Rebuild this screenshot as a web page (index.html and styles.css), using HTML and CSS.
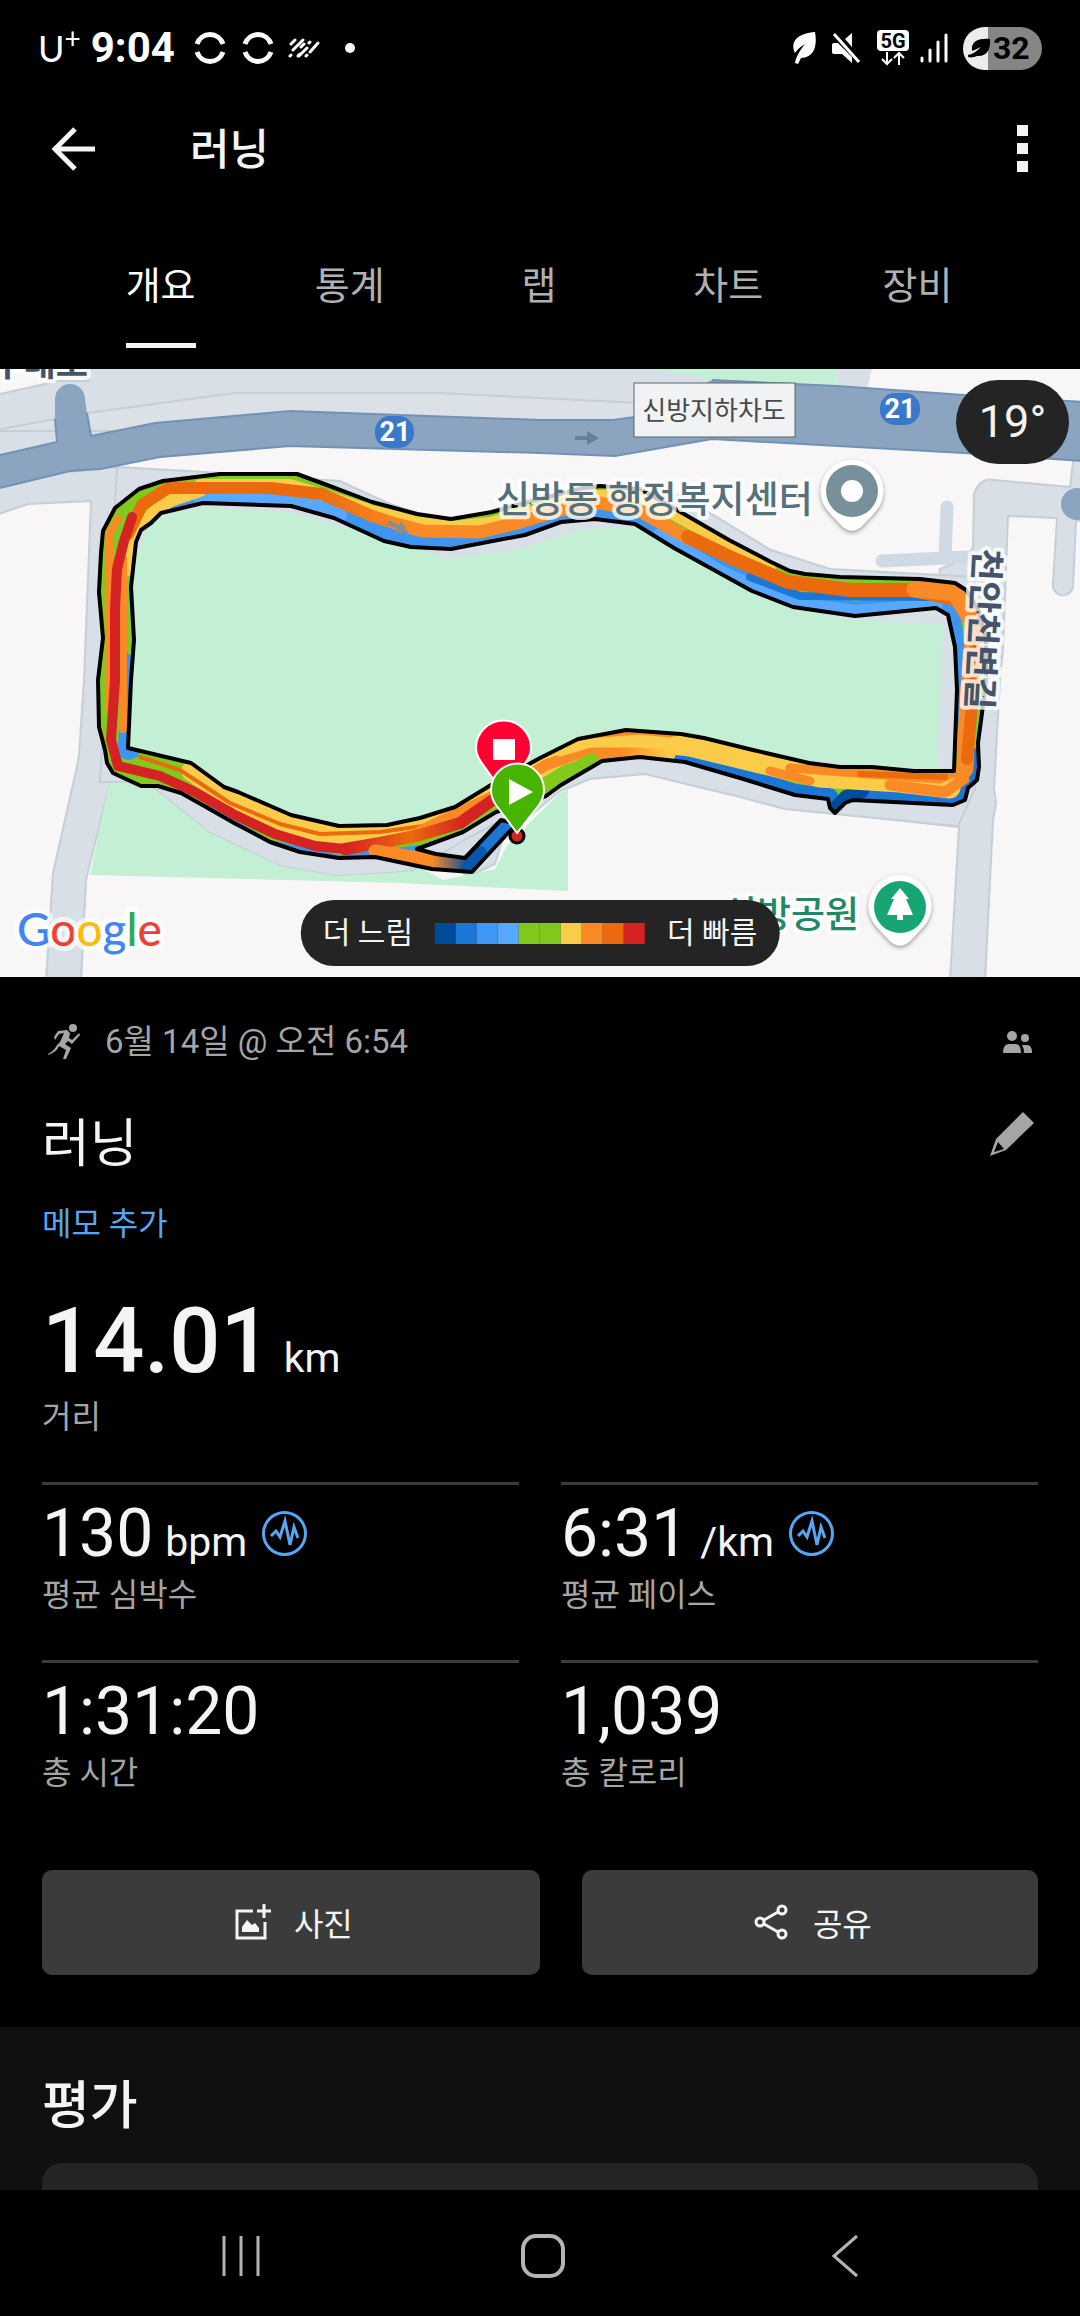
FILE: index.html
```html
<!DOCTYPE html>
<html lang="ko">
<head>
<meta charset="utf-8">
<meta name="viewport" content="width=device-width, initial-scale=1">
<title>러닝</title>
<link rel="stylesheet" href="styles.css">
</head>
<body>

<!-- status bar -->
<div class="status">
	<div class="status-left">
		<span class="carrier">U<sup>+</sup></span>
		<span class="clock">9:04</span>
		<svg class="st-ring" width="32" height="34" viewBox="0 0 32 34"><path d="M3 13a13.7 13.7 0 0 1 26 0M3 21a13.7 13.7 0 0 0 26 0" fill="none" stroke="#fff" stroke-width="5"/></svg>
		<svg class="st-ring" width="32" height="34" viewBox="0 0 32 34"><path d="M3 13a13.7 13.7 0 0 1 26 0M3 21a13.7 13.7 0 0 0 26 0" fill="none" stroke="#fff" stroke-width="5"/></svg>
		<svg class="st-dash" width="32" height="20" viewBox="0 0 32 20"><path d="M3 6l4-4M5 12l10-10M2 18l1-1M11 18l8-8M21 5l1-1M10 18l2-2M18 18l1-1M22 14l8-9M13 9l3-3" fill="none" stroke="#fff" stroke-width="3" stroke-linecap="round"/></svg>
		<span class="st-dot"></span>
	</div>
	<div class="status-right">
		<svg width="26" height="34" viewBox="0 0 26 34"><path d="M4 22C-2 10 8 2 24 1C26 12 25 27 10 27L7 33L4 32C5 26 9 19 14 13C9 16 6 19 4 22Z" fill="#fff"/></svg>
		<svg class="st-mute" width="30" height="34" viewBox="0 0 30 34"><path d="M1 14q0-2 2-2h4l14 14v6l-10-9H3q-2 0-2-2zM14 8l7-6v14z" fill="#fff"/><path d="M3 3l25 28" stroke="#fff" stroke-width="3"/></svg>
		<svg class="st-5g" width="32" height="36" viewBox="0 0 32 36"><rect width="32" height="21" rx="4" fill="#fff"/><text x="16" y="18" text-anchor="middle" class="t-5g">5G</text><path d="M10 22v12M5 29l5 5l5-5M22 35v-12M17 28l5-5l5 5" fill="none" stroke="#fff" stroke-width="2"/></svg>
		<svg class="st-signal" width="28" height="30" viewBox="0 0 28 30"><path d="M2 25v3M10 17v11M18 9v19M26 2v26" stroke="#fff" stroke-width="3" stroke-linecap="round"/></svg>
		<span class="battery"><svg width="23" height="22" viewBox="0 0 23 22"><path d="M4 14C3 5 9 1 22 2C23 13 18 20 9 19C7 20 3 21 0 20L0 18C5 17 9 14 13 10C9 12 6 13 4 14Z" fill="#000"/></svg>32</span>
	</div>
</div>

<!-- app bar -->
<header class="appbar">
	<button class="icon-btn" aria-label="뒤로"><svg width="44" height="44" viewBox="0 0 44 44"><path d="M43 22H4M23 2L3 22l20 20" fill="none" stroke="#f4f4f4" stroke-width="5"/></svg></button>
	<h1>러닝</h1>
	<button class="icon-btn" aria-label="더보기"><svg width="12" height="48" viewBox="0 0 12 48"><path d="M0 0h11v11H0zM0 18h11v11H0zM0 36h11v11H0z" fill="#f4f4f4"/></svg></button>
</header>

<nav class="tabs">
	<div><button class="tab active">개요</button></div>
	<div><button class="tab">통계</button></div>
	<div><button class="tab">랩</button></div>
	<div><button class="tab">차트</button></div>
	<div><button class="tab">장비</button></div>
</nav>

<!-- map -->
<div class="map">
	<svg class="map-canvas" viewBox="0 0 1080 608" preserveAspectRatio="xMidYMid slice">
		<defs>
			<path id="ring" clip-rule="evenodd" fill-rule="evenodd" d="M103 162L115 139L139 120L163 112L220 105H297L327 116L372 133L417 145L451 150L492 143L517 136L583 119L600 117L640 120L677 141L729 171L771 193L790 202L805 205L840 208L920 210L955 214L966 221L978 240L986 270L986 311L982 344L978 374L979 398L977 411L968 419L965 431L953 436L853 431L845 434L835 444L830 439L828 430L795 426L740 409L685 393L640 388L602 392L561 416L546 427L520 436L496 443L463 463L417 480L436 485L465 489L501 451L518 455L508 464L472 503L432 500L375 488L339 489L300 483L270 473L234 454L206 438L181 424L158 417H141L113 404L107 394L105 381L99 358L98 311L103 269L99 223L101 184ZM136 173L131 218L134 271L131 311L128 379L191 394L224 418L238 423L291 446L339 457L387 456L420 449L455 438L491 416L540 389L578 370L626 361L681 365L704 369L753 381L809 394L840 398L872 398L914 402H954L957 321L955 278L948 246L936 239L855 247L793 238L752 222L674 179L635 155L595 150L561 153L525 166L451 180L411 178L384 172L334 149L291 137L203 134L161 144L151 154L141 161Z"/>
			<clipPath id="clip"><use href="#ring"/></clipPath>
			<linearGradient id="gOrange"><stop offset="0" stop-color="#ea6a0d"/><stop offset=".65" stop-color="#ea6a0d"/><stop offset="1" stop-color="#fa8a25"/></linearGradient>
			<linearGradient id="gRed"><stop offset="0" stop-color="#d52222"/><stop offset=".35" stop-color="#ea6a0d"/><stop offset=".65" stop-color="#d52222"/></linearGradient>
			<linearGradient id="gTail"><stop offset="0" stop-color="#fa8a25"/><stop offset=".6" stop-color="#fa8a25"/><stop offset="1" stop-color="#004a9e"/></linearGradient>
			<linearGradient id="gMid"><stop offset="0" stop-color="#fa8a25"/><stop offset=".8" stop-color="#fa8a25"/><stop offset="1" stop-color="#fbcb4a"/></linearGradient>
			<filter id="drop" x="-30%" y="-30%" width="160%" height="160%"><feDropShadow dx="0" dy="2" stdDeviation="2" flood-opacity=".4"/></filter>
		</defs>

		<rect width="1080" height="608" fill="#f8f6f7"/>

		<!-- roads -->
		<g fill="#d8dfe6" stroke="#c4cfd6" stroke-width="2">
			<path d="M-4 26L58 12L90 12L60 -4H700L712 11V60H400L0 100Z"/>
			<path d="M-4 61L55 50L88 44L235 24H440L540 29L640 34V62H-4Z" fill="#dce1e8"/>
			<path d="M-4 110V146L28 135L91 132L84 311L79 386L76 402L53 504L46 612H81L86 511L110 413L170 330L180 160L117 98Z"/>
			<path d="M973 178L974 125Q980 108 994 111L1070 118L1074 86L1084 88V152L1076 152L1073 218A10 10 0 0 1 1053 214L1057 149L1008 147L1003 280L1000 311L994 420L996 434L993 451L985 612H950L959 458L915 453L940 200L967 190Z"/>
			<path d="M117 98L205 103L340 112L390 135L450 155L540 126H680L771 181L830 200L975 208V420L958 457L915 453L785 440L740 428L645 405L590 410L560 422L503 469L495 495L470 507L430 490L405 503L335 507L280 497L210 464L155 420L140 413H100Z"/>
		</g>
		<g fill="none" stroke="#cfdae4" stroke-width="13" stroke-linecap="round">
			<path d="M882 192L968 188M947 138L945 190"/>
		</g>

		<!-- parks -->
		<g fill="#c3f0d5">
			<path d="M128 379L132 200L150 150L203 138L290 143L400 175L445 189L515 182L583 160L635 158L750 220L790 240L850 250L943 256L941 311L937 400L870 397L780 388L640 360L590 366L530 400L470 430L400 455L330 456L250 430L190 395Z"/>
			<path d="M109 414L140 413L158 423L210 464L280 497L335 507L405 503L418 497L443 511L495 500L508 475L560 424L568 420V522L400 514L90 506Z"/>
			<path d="M650 0L712 11L837 17L838 0Z"/>
		</g>
		<path d="M838 0H872L867 22L837 17Z" fill="#d8dfe6"/>
		<path d="M872 0H1080V33L964 26L867 21Z" fill="#f8f6f7"/>
		<path d="M410 503L470 468L500 452" fill="none" stroke="#c4cfd6" stroke-width="2"/>

		<!-- highway -->
		<path d="M-4 87L58 73L55 50V30A15 15 0 0 1 85 30L87 44L91 67L155 54L290 42L540 51H613L635 48L712 11L837 17L964 26L1084 33V92L964 84L712 70L615 87L540 84L290 77L160 88L100 100L70 102L-4 120Z" fill="#8ba4c0"/>
		<path d="M-4 87L57 73L55 50M87 44L91 67L155 54L290 42L540 51H613L635 48M712 11L837 17L964 26L1084 33M-4 120L70 102L100 100L160 88L290 77L540 84L615 87L712 70L964 84L1084 92" fill="none" stroke="#7292b5" stroke-width="2"/>
		<circle cx="1077" cy="135" r="16" fill="#8ba4c0"/>
		<path d="M575 67h12v-5l12 7l-12 7v-5h-12z" fill="#6b7e93"/>

		<!-- run track, coloured by pace -->
		<use href="#ring" fill="#82c91e"/>
		<g clip-path="url(#clip)" fill="none" stroke-linejoin="round" stroke-linecap="round">
			<path d="M129 380L134 271L131 218L134 173L151 152L203 131L291 134L334 146L384 168L451 176L525 162L595 146L635 151L674 175L752 218L793 234L855 243L936 236L950 250L957 300L954 350" stroke="#3d95f0" stroke-width="22"/>
			<path d="M200 128L300 132L340 146M660 166L720 203L790 234L855 243L936 236" stroke="#58a8ff" stroke-width="14"/>
			<path d="M750 208L800 227L930 228" stroke="#1b76d4" stroke-width="8"/>
			<path d="M131 200L132 280" stroke="#82c91e" stroke-width="12"/>
			<path d="M640 388L685 393L740 409L795 426L828 430L835 444L853 431L950 436L970 420L978 390" stroke="#1b76d4" stroke-width="22"/>
			<path d="M830 445L846 428L862 422" stroke="#004a9e" stroke-width="14"/>
			<path d="M206 440L270 475L339 490L420 480" stroke="#3d95f0" stroke-width="8"/>
			<path d="M602 358L640 358M740 378L810 394" stroke="#1b76d4" stroke-width="8"/>

			<path d="M127 200L138 164L150 148L168 132L200 121" stroke="#fbcb4a" stroke-width="14"/>
			<path d="M200 116H290L330 128L372 142L420 154L451 158L490 154L540 141L580 127L640 127L690 154L730 178L770 200" stroke="#fbcb4a" stroke-width="12"/>
			<path d="M110 340L109 165L118 150" stroke="#fa8a25" stroke-width="8"/>
			<path d="M123 190V360" stroke="#fa8a25" stroke-width="8"/>
			<path d="M400 156L423 162L480 163L517 154L560 141L600 134L640 142L690 170" stroke="#fa8a25" stroke-width="13"/>
			<path d="M128 165L142 136L168 119H270L322 125L372 147L410 159" stroke="url(#gOrange)" stroke-width="12"/>
			<path d="M688 168L736 191L788 213L850 221L912 221L955 230" stroke="#ea6a0d" stroke-width="14"/>
			<path d="M915 220L955 224L974 255L968 330L965 400L950 416" stroke="#fa8a25" stroke-width="17"/>
			<path d="M976 260L972 335L967 390" stroke="#ea6a0d" stroke-width="12"/>

			<path d="M192 402L240 435L291 456L339 466L400 464L460 446L510 416L560 386L620 369L690 377L760 394L820 408L900 413L950 419" stroke="#fbcb4a" stroke-width="21"/>
			<path d="M140 388L180 401L230 434L280 455L320 465L380 463L430 456L500 424" stroke="#ea6a0d" stroke-width="4"/>
			<path d="M420 462L500 424L546 396L580 384L640 384L670 386" stroke="url(#gMid)" stroke-width="11"/>
			<path d="M552 411L592 389" stroke="#82c91e" stroke-width="10"/>
			<path d="M560 383L600 371L640 368" stroke="#fbcb4a" stroke-width="9"/>
			<path d="M600 364L640 361L670 364M770 402L810 412M790 399L870 405L940 410L962 400" stroke="#fa8a25" stroke-width="9"/>
			<path d="M860 405L945 408" stroke="#ea6a0d" stroke-width="6"/>
			<path d="M890 416L945 423L964 410" stroke="#fa8a25" stroke-width="11"/>
			<path d="M132 148L124 172L117 200L115 240V311L111 371L118 397L160 407L195 423L235 446L275 465L315 477L345 480" stroke="#d52222" stroke-width="10"/>
			<path d="M345 480L380 474L420 466L460 454L500 426L530 405" stroke="url(#gRed)" stroke-width="12"/>
			<path d="M375 482L400 486L435 492L470 497" stroke="url(#gTail)" stroke-width="13"/>
			<path d="M472 500L512 448" stroke="#1b76d4" stroke-width="20"/>
			<path d="M468 500L480 484" stroke="#004a9e" stroke-width="14" opacity=".7"/>
		</g>
		<use href="#ring" fill="none" stroke="#000" stroke-width="4" stroke-linejoin="round"/>
		<path d="M389 151l10 5l2-4l8 12h-14l2-4l-10-5z" fill="#8a8c8e"/>

		<!-- labels -->
		<text x="88" y="7" text-anchor="end" class="lbl road">남부대로</text>
		<text transform="translate(975 179) rotate(93)" class="lbl road">천안천변길</text>
		<text x="496" y="144" class="lbl place">신방동 행정복지센터</text>
		<text x="723" y="559" class="lbl park">신방공원</text>
		<rect x="634" y="14" width="161" height="54" fill="#f1f2f4" stroke="#5f6368" stroke-width="1"/>
		<text x="714" y="51" text-anchor="middle" class="underpass">신방지하차도</text>
		<rect x="375" y="47" width="39" height="32" rx="15" fill="#3a78c9"/>
		<text x="395" y="72" text-anchor="middle" class="shield">21</text>
		<rect x="880" y="24" width="40" height="32" rx="15" fill="#3a78c9"/>
		<text x="900" y="49" text-anchor="middle" class="shield">21</text>

		<!-- place pins -->
		<g filter="url(#drop)">
			<path d="M852 91A31 31 0 0 1 876 142L861 158Q852 165 843 158L828 142A31 31 0 0 1 852 91Z" fill="#fff"/>
			<path d="M900 506A31 31 0 0 1 924 557L909 573Q900 580 891 573L876 557A31 31 0 0 1 900 506Z" fill="#fff"/>
		</g>
		<circle cx="852" cy="122" r="26" fill="#78909c"/>
		<circle cx="852" cy="122" r="11" fill="#fff"/>
		<circle cx="900" cy="538" r="26" fill="#17a673"/>
		<path d="M900 519l9 11h-3l7 16h-10v5h-6v-5h-10l7-16h-3z" fill="#fff"/>

		<!-- start and stop -->
		<circle cx="517" cy="467" r="7" fill="#d52222" stroke="#000" stroke-width="3"/>
		<path d="M503 424L484 397Q476 387 476 379A27 27 0 0 1 531 379Q531 387 523 397Z" fill="#ff0030" stroke="#fff" stroke-width="2"/>
		<rect x="493" y="370" width="22" height="21" fill="#fff"/>
		<path d="M517 464L496 436Q491 429 491 421A26 26 0 0 1 544 421Q544 429 539 436Z" fill="#46b400" stroke="#fff" stroke-width="2"/>
		<path d="M509 410V436L533 423Z" fill="#fff"/>

		<text x="17" y="577" class="google"><tspan fill="#4285f4">G</tspan><tspan fill="#ea4335">o</tspan><tspan fill="#fbbc04">o</tspan><tspan fill="#4285f4">g</tspan><tspan fill="#34a853">l</tspan><tspan fill="#ea4335">e</tspan></text>
	</svg>

	<div class="temp">19°</div>

	<div class="legend">
		<span>더 느림</span>
		<div class="scale"><i class="c1"></i><i class="c2"></i><i class="c3"></i><i class="c4"></i><i class="c5"></i><i class="c5"></i><i class="c6"></i><i class="c7"></i><i class="c8"></i><i class="c9"></i></div>
		<span>더 빠름</span>
	</div>
</div>

<!-- activity details -->
<main class="details">
	<div class="date-row">
		<svg width="42" height="42" viewBox="2 3 42 42" fill="#a5a5a5"><circle cx="33" cy="10" r="4"/><path d="M15 22L14 19L18 13L27 12L30 15L29 20L32 22L39 15L40 17L32 26L28 23L25 26L31 30L26 41L23 41L26 32L19 28Q17 34 8 37L8 36Q15 32 17 27L20 24L24 15L19 16Z"/></svg>
		<span>6월 14일 @ 오전 6:54</span>
		<svg width="42" height="42" viewBox="0 0 42 42" fill="#a5a5a5"><circle cx="16" cy="15" r="5"/><circle cx="29" cy="17" r="4"/><path d="M7 32Q7 23 13 23H19Q25 23 25 32ZM26 24H31Q36 24 36 32H28Q28 27 26 24Z"/></svg>
	</div>

	<div class="title-row">
		<h2>러닝</h2>
		<button class="icon-btn edit" aria-label="편집"><svg width="44" height="44" viewBox="0 0 44 44"><path d="M33 0L44 11L16 38L0 44L6 27Z" fill="#a5a5a5"/><path d="M8 30L14 37L4 40Z" fill="#000"/></svg></button>
	</div>
	<a class="memo" href="#">메모 추가</a>

	<div class="distance"><b>14.01</b><span class="unit">km</span></div>
	<div class="label">거리</div>

	<div class="stats">
		<div class="stat">
			<div class="value">130 <span class="unit">bpm</span><svg width="45" height="45" viewBox="0 0 45 45"><use href="#pulse"/></svg></div>
			<div class="label">평균 심박수</div>
		</div>
		<div class="stat">
			<div class="value">6:31 <span class="unit">/km</span><svg width="45" height="45" viewBox="0 0 45 45"><g id="pulse" fill="none" stroke="#58a5f2" stroke-width="3"><circle cx="22.5" cy="22.5" r="21"/><path d="M9 25L14 20L18 26L23 10L28 34L32 16L36 27"/></g></svg></div>
			<div class="label">평균 페이스</div>
		</div>
		<div class="stat">
			<div class="value">1:31:20</div>
			<div class="label">총 시간</div>
		</div>
		<div class="stat">
			<div class="value">1,039</div>
			<div class="label">총 칼로리</div>
		</div>
	</div>

	<div class="actions">
		<button><svg width="36" height="36" viewBox="0 0 36 36" fill="none" stroke="#f4f4f4" stroke-width="3"><path d="M18 7H2V34H30V18M29 0V14M22 7H36"/><path d="M7 28V23L12 16L17 21L20 19L24 24V28Z" fill="#f4f4f4" stroke="none"/></svg>사진</button>
		<button><svg width="36" height="36" viewBox="0 0 36 36" fill="none" stroke="#f4f4f4" stroke-width="3"><circle cx="6" cy="18" r="4"/><circle cx="28" cy="6" r="4"/><circle cx="28" cy="30" r="4"/><path d="M10 16L24 8M10 20L24 28"/></svg>공유</button>
	</div>
</main>

<section class="rating">
	<h2>평가</h2>
	<div class="card"></div>
</section>

<!-- system navigation -->
<div class="sysnav">
	<button aria-label="최근 앱"><svg width="42" height="44" viewBox="0 0 42 44"><path d="M4 2v40M21 2v40M38 2v40" stroke="#b4b4b4" stroke-width="3"/></svg></button>
	<button aria-label="홈"><svg width="44" height="44" viewBox="0 0 44 44"><rect x="2" y="2" width="40" height="40" rx="13" fill="none" stroke="#b4b4b4" stroke-width="4"/></svg></button>
	<button aria-label="뒤로"><svg width="28" height="44" viewBox="0 0 28 44"><path d="M26 2L3 22L26 42" fill="none" stroke="#b4b4b4" stroke-width="3"/></svg></button>
</div>

</body>
</html>
```

FILE: styles.css
```css
* {
	box-sizing: border-box;
}

body {
	margin: 0;
	min-height: 100vh;
	display: flex;
	flex-direction: column;
	background: #000;
	color: #f4f4f4;
	font-family: Roboto, "Noto Sans CJK KR", sans-serif;
	font-size: 32px;
	line-height: 40px;
}

h1, h2 {
	margin: 0;
	font-weight: 500;
}

button {
	margin: 0;
	padding: 0;
	border: 0;
	background: none;
	color: inherit;
	font-family: inherit;
	cursor: pointer;
}

svg {
	display: block;
	flex: none;
}

/* status bar */

.status {
	display: flex;
	justify-content: space-between;
	align-items: center;
	height: 96px;
	padding: 0 38px;
	color: #fff;
}

.status-left,
.status-right {
	display: flex;
	align-items: center;
}

.carrier {
	font-family: Lato, sans-serif;
	font-size: 36px;
	font-weight: 400;
}

.carrier sup {
	font-size: 28px;
	line-height: 0;
}

.clock {
	margin-left: 10px;
	margin-right: 3px;
	font-size: 42px;
	font-weight: 700;
}

.st-ring {
	margin-left: 16px;
}

.st-dash {
	margin-left: 14px;
}

.st-dot {
	width: 10px;
	height: 10px;
	margin-left: 25px;
	border-radius: 50%;
	background: #fff;
}

.st-mute {
	margin-left: 14px;
}

.st-5g {
	margin-left: 16px;
}

.t-5g {
	font: 700 20px Roboto, sans-serif;
}

.st-signal {
	margin-left: 11px;
}

.battery {
	display: flex;
	align-items: center;
	gap: 2px;
	width: 79px;
	height: 43px;
	margin-left: 15px;
	padding-left: 5px;
	border-radius: 22px;
	background: linear-gradient(90deg, #ececec 25px, #858585 25px);
	color: #000;
	font-size: 32px;
	font-weight: 700;
}

/* app bar */

.appbar {
	display: flex;
	align-items: center;
	height: 105px;
	padding: 0 51px 0 52px;
}

.appbar h1 {
	flex: 1;
	margin-left: 94px;
	padding-top: 2px;
	font-size: 43px;
}

/* tabs */

.tabs {
	display: flex;
	padding: 28px 68px 21px 66px;
}

.tabs div {
	flex: 1;
	display: flex;
	justify-content: center;
}

.tab {
	height: 119px;
	padding-bottom: 8px;
	border-bottom: 5px solid transparent;
	color: #b0b0b0;
	font-size: 38px;
}

.tab.active {
	border-color: #f4f4f4;
	color: #fff;
}

/* map */

.map {
	position: relative;
	height: 608px;
	overflow: hidden;
}

.map-canvas {
	width: 100%;
	height: 100%;
}

.lbl {
	paint-order: stroke;
	stroke: #fff;
	stroke-opacity: .8;
	stroke-width: 8px;
	stroke-linejoin: round;
	font-family: "Noto Sans CJK KR", sans-serif;
}

.road {
	fill: #44546a;
	font-size: 35px;
	font-weight: 700;
}

.place {
	fill: #56707c;
	font-size: 37px;
	font-weight: 500;
}

.park {
	fill: #1f8a63;
	font-size: 37px;
	font-weight: 500;
}

.underpass {
	fill: #4a4a4a;
	font: 26px "Noto Sans CJK KR", sans-serif;
}

.shield {
	fill: #fff;
	font: 700 27px Roboto, sans-serif;
}

.google {
	paint-order: stroke;
	stroke: #fff;
	stroke-opacity: .7;
	stroke-width: 10px;
	stroke-linejoin: round;
	font: 500 46px Lato, sans-serif;
}

.temp {
	position: absolute;
	top: 11px;
	right: 11px;
	width: 113px;
	border-radius: 42px;
	background: #242424;
	font-size: 45px;
	line-height: 84px;
	text-align: center;
}

.legend {
	position: absolute;
	left: 50%;
	bottom: 11px;
	transform: translateX(-50%);
	display: flex;
	align-items: center;
	gap: 22px;
	height: 66px;
	padding: 0 22px;
	border-radius: 33px;
	background: #242424;
	font-size: 30px;
	white-space: nowrap;
}

.scale {
	display: flex;
}

.scale i {
	width: 21px;
	height: 21px;
}

.c1 { background: #004a9e; }
.c2 { background: #1b76d4; }
.c3 { background: #3e97f5; }
.c4 { background: #58a8ff; }
.c5 { background: #82c91e; }
.c6 { background: #fbcb4a; }
.c7 { background: #fa8a25; }
.c8 { background: #ea6a0d; }
.c9 { background: #d52222; }

/* details */

.details {
	padding: 44px 42px 52px;
}

.date-row {
	display: flex;
	align-items: center;
	color: #a5a5a5;
	font-size: 33px;
}

.date-row span {
	flex: 1;
	margin-left: 21px;
}

.title-row {
	display: flex;
	justify-content: space-between;
	margin-top: 51px;
}

.title-row h2,
.rating h2 {
	font-size: 52px;
	line-height: 62px;
}

.title-row h2 {
	font-weight: 400;
}

.edit {
	margin-right: 4px;
	align-self: flex-start;
}

.edit svg {
	margin-top: -2px;
}

.memo {
	display: block;
	width: max-content;
	margin-top: 24px;
	color: #58a5f2;
	line-height: 48px;
	text-decoration: none;
}

.distance {
	display: flex;
	align-items: baseline;
	margin-top: 50px;
	margin-bottom: 11px;
	line-height: 88px;
}

.distance b {
	font-size: 90px;
	font-weight: 500;
}

.unit {
	margin-left: 12px;
	font-size: 41px;
	line-height: 40px;
}

.label {
	color: #a5a5a5;
}

.stats {
	display: grid;
	grid-template-columns: 1fr 1fr;
	column-gap: 42px;
	margin-top: 45px;
}

.stat {
	padding: 17px 0 45px;
	border-top: 3px solid #3b3b3b;
}

.value {
	display: flex;
	align-items: baseline;
	margin-bottom: 9px;
	font-size: 66px;
	line-height: 64px;
}

.value svg {
	margin-left: 15px;
}

.actions {
	display: grid;
	grid-template-columns: 12fr 11fr;
	column-gap: 42px;
	margin-top: 32px;
}

.actions button {
	display: flex;
	align-items: center;
	justify-content: center;
	gap: 23px;
	height: 105px;
	padding: 0 0 2px 6px;
	border-radius: 10px;
	background: #3b3b3b;
	font-size: 32px;
}

.rating {
	flex: 1;
	display: flex;
	flex-direction: column;
	padding: 49px 42px 0;
	background: #101010;
}

.card {
	flex: 1;
	min-height: 27px;
	margin-top: 25px;
	border-radius: 20px 20px 0 0;
	background: #242424;
}

/* system navigation */

.sysnav {
	display: flex;
	align-items: center;
	height: 126px;
	padding: 6px 84px 0 90px;
}

.sysnav button {
	flex: 1;
	display: flex;
	justify-content: center;
}
```
